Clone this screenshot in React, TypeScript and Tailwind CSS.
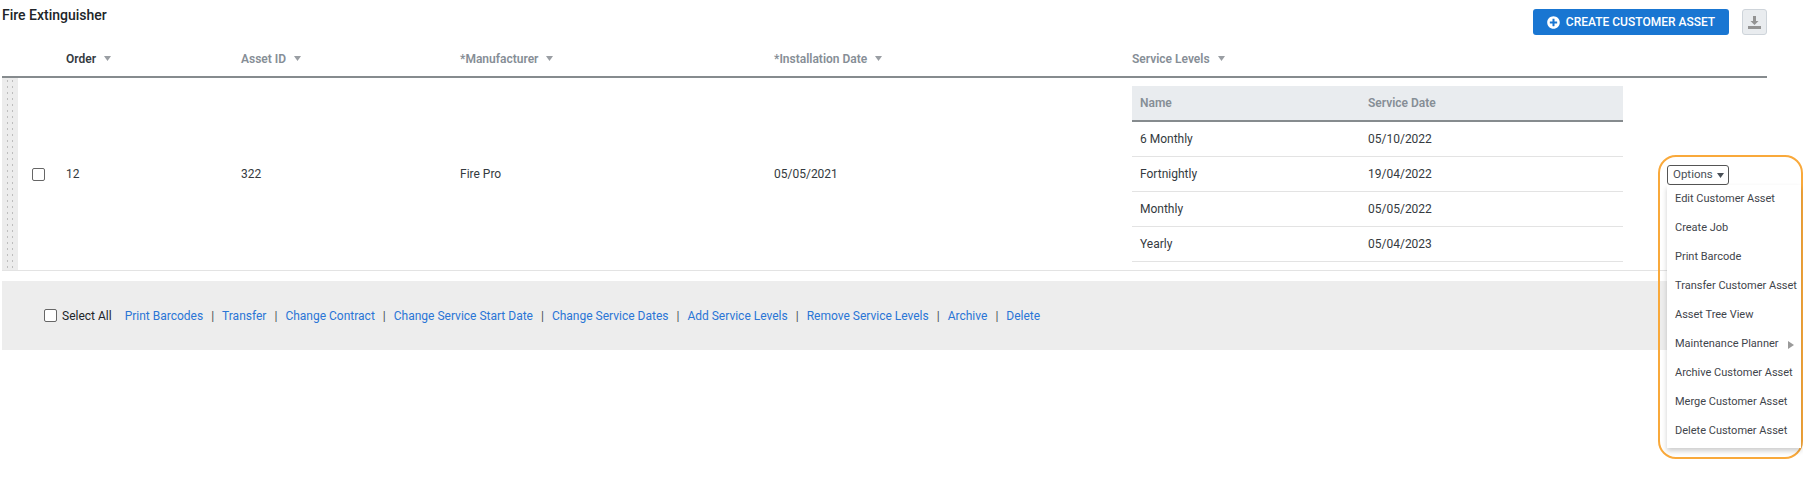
import { FaPlusCircle } from 'react-icons/fa'

const serviceLevels = [
  { name: '6 Monthly', date: '05/10/2022' },
  { name: 'Fortnightly', date: '19/04/2022' },
  { name: 'Monthly', date: '05/05/2022' },
  { name: 'Yearly', date: '05/04/2023' },
]

const bulkLinks = [
  'Print Barcodes',
  'Transfer',
  'Change Contract',
  'Change Service Start Date',
  'Change Service Dates',
  'Add Service Levels',
  'Remove Service Levels',
  'Archive',
  'Delete',
]

const menuItems = [
  'Edit Customer Asset',
  'Create Job',
  'Print Barcode',
  'Transfer Customer Asset',
  'Asset Tree View',
  'Maintenance Planner',
  'Archive Customer Asset',
  'Merge Customer Asset',
  'Delete Customer Asset',
]

function Caret({ className = 'ml-[8px]' }: { className?: string }) {
  return (
    <svg width="7" height="5" viewBox="0 0 7 5" className={className}>
      <path d="M0 0h7L3.500 5z" fill="currentColor" />
    </svg>
  )
}

function HeaderCell({ label, dark }: { label: string; dark?: boolean }) {
  return (
    <div className={`flex items-center font-semibold ${dark ? 'text-[#343a40]' : 'text-[#868e96]'}`}>
      <span>{label}</span>
      <span className="text-[#9a9ea3]">
        <Caret />
      </span>
    </div>
  )
}

function Checkbox() {
  return <span className="block w-[13px] h-[13px] border border-[#666] rounded-[2px] bg-white" />
}

export default function App() {
  return (
    <div className="relative h-[498px] bg-white text-[12px] text-[#343a40] font-['Roboto',sans-serif] overflow-hidden">
      <div className="pl-[2px] w-[1767px]">
        {/* Title + actions */}
        <div className="flex justify-between h-[46px] pt-[9px]">
          <h2 className="-mt-[1px] text-[14px] leading-[14px] font-medium text-[#212529]">Fire Extinguisher</h2>
          <div className="flex gap-[13px] h-[26px]">
            <button className="flex items-center justify-center w-[196px] bg-[#1976d2] rounded-[3px] text-white text-[12px] font-medium">
              <FaPlusCircle className="mr-[6px] text-[13px]" />
              CREATE CUSTOMER ASSET
            </button>
            <button className="flex items-center justify-center w-[25px] bg-[#e9ecef] border border-[#ced4da] rounded-[3px]">
              <svg width="13" height="13" viewBox="0 0 13 13" fill="#939393">
                <path d="M5 0h3v5h2.500L6.500 9 2.500 5H5z" />
                <path d="M0 10h13v3H0z" />
              </svg>
            </button>
          </div>
        </div>

        {/* Column headers */}
        <div className="grid grid-cols-[64px_175px_219px_314px_358px_1fr] items-center h-[25px] pb-[5px] border-b-2 border-[#868b8e] box-content">
          <div />
          <HeaderCell label="Order" dark />
          <HeaderCell label="Asset ID" />
          <HeaderCell label="*Manufacturer" />
          <HeaderCell label="*Installation Date" />
          <HeaderCell label="Service Levels" />
        </div>

        {/* Asset row */}
        <div className="grid grid-cols-[16px_48px_175px_219px_314px_358px_491px] items-center h-[193px] border-b border-[#e3e3e3]">
          <div className="self-stretch bg-[#ececec] flex justify-center">
            <div className="w-[10px] bg-[radial-gradient(circle,#bdbdbd_1px,transparent_1px)] bg-[length:5px_6px]" />
          </div>
          <div className="pl-[14px]">
            <Checkbox />
          </div>
          <div>12</div>
          <div>322</div>
          <div>Fire Pro</div>
          <div>05/05/2021</div>
          <div className="self-start pt-[8px]">
            <div className="grid grid-cols-[228px_1fr] items-center h-[36px] px-[8px] bg-[#e9ecef] border-b-2 border-[#868b8e] font-semibold text-[#868e96]">
              <div>Name</div>
              <div>Service Date</div>
            </div>
            {serviceLevels.map((level) => (
              <div
                key={level.name}
                className="grid grid-cols-[228px_1fr] items-center h-[35px] px-[8px] border-b border-[#e3e3e3]"
              >
                <div>{level.name}</div>
                <div>{level.date}</div>
              </div>
            ))}
          </div>
        </div>

        {/* Bulk actions */}
        <div className="flex items-center h-[69px] mt-[10px] pl-[42px] bg-[#ededed]">
          <Checkbox />
          <span className="ml-[5px] mr-[13px] text-[#212529]">Select All</span>
          {bulkLinks.map((link, i) => (
            <span key={link} className="flex items-center">
              {i > 0 && <span className="mx-[8px] text-[#495057]">|</span>}
              <a className="text-[#2a75d6]">{link}</a>
            </span>
          ))}
        </div>
      </div>

      {/* Orange highlight + open dropdown, floats over the table */}
      <div className="absolute left-[1658px] top-[155px] w-[145px] h-[304px] border-2 border-[#f9a93b] rounded-[18px]">
        <button className="absolute left-[7px] top-[8px] flex items-center w-[62px] h-[20px] pl-[5px] border border-[#555] rounded-[3px] bg-white text-[11.5px] text-[#495057]">
          Options
          <Caret className="ml-[4px]" />
        </button>
        <div className="absolute left-[7px] top-[28px] w-[134px] h-[263px] bg-white shadow-[0_3px_5px_rgba(0,0,0,0.2)]">
          {menuItems.map((item) => (
            <div key={item} className="flex items-center h-[29px] pl-[8px] text-[11px] text-[#3f454b]">
              {item}
              {item === 'Maintenance Planner' && (
                <svg width="6" height="8" viewBox="0 0 6 8" className="ml-[9px] text-[#9a9a9a]">
                  <path d="M0 0l6 4-6 4z" fill="currentColor" />
                </svg>
              )}
            </div>
          ))}
        </div>
      </div>
    </div>
  )
}
